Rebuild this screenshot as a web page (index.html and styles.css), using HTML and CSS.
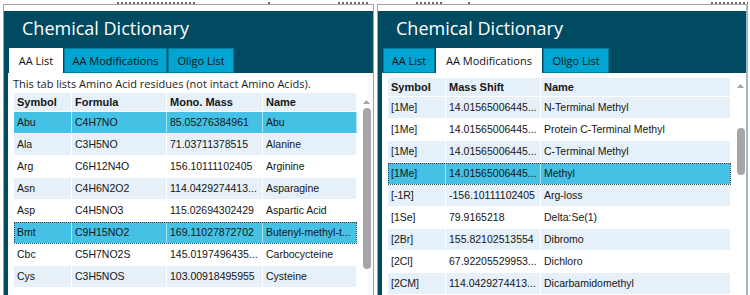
FILE: index.html
```
<!DOCTYPE html>
<html lang="en">
<head>
    <meta charset="UTF-8">
    <meta name="viewport" content="width=device-width, initial-scale=1.0">
    <title>Chemical Dictionary</title>
    <link rel="stylesheet" href="styles.css">
</head>
<body>
    <!-- bottom edge of the row above, cut off by the capture -->
    <div class="strip">
        <span class="crumb crumb-1"></span>
        <span class="crumb crumb-2"></span>
        <span class="crumb crumb-3"></span>
        <span class="crumb crumb-4"></span>
        <span class="crumb crumb-5"></span>
        <span class="crumb crumb-6"></span>
    </div>

    <div class="windows">
        <!-- AA List tab -->
        <section class="window">
            <div class="panel">
                <h1 class="title">Chemical Dictionary</h1>
                <div class="tabs">
                    <div class="tab tab-aa active">AA List</div>
                    <div class="tab tab-mod">AA Modifications</div>
                    <div class="tab tab-oligo">Oligo List</div>
                </div>
                <div class="page">
                    <p class="note">This tab lists Amino Acid residues (not intact Amino Acids).</p>
                    <div class="grid">
                        <table class="list">
                            <colgroup>
                                <col class="col-symbol">
                                <col class="col-formula">
                                <col class="col-mass">
                                <col>
                            </colgroup>
                            <thead>
                                <tr><th>Symbol</th><th>Formula</th><th>Mono. Mass</th><th>Name</th></tr>
                            </thead>
                            <tbody>
                                <tr class="selected"><td>Abu</td><td>C4H7NO</td><td>85.05276384961</td><td>Abu</td></tr>
                                <tr class="alt"><td>Ala</td><td>C3H5NO</td><td>71.03711378515</td><td>Alanine</td></tr>
                                <tr><td>Arg</td><td>C6H12N4O</td><td>156.10111102405</td><td>Arginine</td></tr>
                                <tr class="alt"><td>Asn</td><td>C4H6N2O2</td><td>114.0429274413...</td><td>Asparagine</td></tr>
                                <tr><td>Asp</td><td>C4H5NO3</td><td>115.02694302429</td><td>Aspartic Acid</td></tr>
                                <tr class="selected focus"><td>Bmt</td><td>C9H15NO2</td><td>169.11027872702</td><td>Butenyl-methyl-t...</td></tr>
                                <tr><td>Cbc</td><td>C5H7NO2S</td><td>145.0197496435...</td><td>Carbocycteine</td></tr>
                                <tr class="alt"><td>Cys</td><td>C3H5NOS</td><td>103.00918495955</td><td>Cysteine</td></tr>
                                <tr><td></td><td></td><td></td><td></td></tr>
                            </tbody>
                        </table>
                        <div class="scrollbar">
                            <svg class="arrow" width="7" height="4" viewBox="0 0 7 4"><path d="M0 4 L3.5 0 L7 4 Z"/></svg>
                            <div class="thumb thumb-aa"></div>
                        </div>
                    </div>
                </div>
            </div>
        </section>

        <!-- AA Modifications tab -->
        <section class="window window-last">
            <div class="panel">
                <h1 class="title">Chemical Dictionary</h1>
                <div class="tabs">
                    <div class="tab tab-aa">AA List</div>
                    <div class="tab tab-mod active">AA Modifications</div>
                    <div class="tab tab-oligo">Oligo List</div>
                </div>
                <div class="page page-mods">
                    <div class="grid">
                        <table class="list">
                            <colgroup>
                                <col class="col-symbol">
                                <col class="col-formula">
                                <col>
                            </colgroup>
                            <thead>
                                <tr><th>Symbol</th><th>Mass Shift</th><th>Name</th></tr>
                            </thead>
                            <tbody>
                                <tr class="alt"><td>[1Me]</td><td>14.01565006445...</td><td>N-Terminal Methyl</td></tr>
                                <tr><td>[1Me]</td><td>14.01565006445...</td><td>Protein C-Terminal Methyl</td></tr>
                                <tr class="alt"><td>[1Me]</td><td>14.01565006445...</td><td>C-Terminal Methyl</td></tr>
                                <tr class="selected focus"><td>[1Me]</td><td>14.01565006445...</td><td>Methyl</td></tr>
                                <tr class="alt"><td>[-1R]</td><td>-156.10111102405</td><td>Arg-loss</td></tr>
                                <tr><td>[1Se]</td><td>79.9165218</td><td>Delta:Se(1)</td></tr>
                                <tr class="alt"><td>[2Br]</td><td>155.82102513554</td><td>Dibromo</td></tr>
                                <tr><td>[2Cl]</td><td>67.92205529953...</td><td>Dichloro</td></tr>
                                <tr class="alt"><td>[2CM]</td><td>114.0429274413...</td><td>Dicarbamidomethyl</td></tr>
                            </tbody>
                        </table>
                        <div class="scrollbar">
                            <svg class="arrow arrow-mods" width="7" height="4" viewBox="0 0 7 4"><path d="M0 4 L3.5 0 L7 4 Z"/></svg>
                            <div class="thumb thumb-mods"></div>
                        </div>
                    </div>
                </div>
            </div>
        </section>
    </div>
</body>
</html>
```

FILE: styles.css
```
/* General Reset */
* {
    margin: 0;
    padding: 0;
    box-sizing: border-box;
}

body {
    font-family: "Open Sans", "Noto Sans", sans-serif;
    background: #ffffff;
    color: #1b1b1b;
    width: 750px;
    height: 295px;
    overflow: hidden;
}

/* Cut off strip at the top */
.strip {
    display: flex;
    align-items: flex-end;
    height: 4px;
}

.crumb {
    height: 2px;
    background: repeating-linear-gradient(90deg, #6a6a6a 0 2px, transparent 2px 4px);
}

.crumb-1 { margin-left: 117px; width: 78px; }
.crumb-2 { margin-left: 73px; width: 4px; }
.crumb-3 { margin-left: 66px; width: 30px; }
.crumb-4 { margin-left: 48px; width: 27px; }
.crumb-5 { margin-left: 25px; width: 4px; }
.crumb-6 { margin-left: 239px; width: 37px; }

/* Windows */
.windows {
    display: flex;
    gap: 3px;
    padding-left: 3px;
    height: 291px;
}

.window {
    width: 371px;
    height: 100%;
    padding-top: 6px;
    border-top: 1px solid #a3a3a3;
    border-left: 1px solid #a3a3a3;
    border-right: 1px solid #a3a3a3;
    overflow: hidden;
}

.window-last {
    border-right: 2px solid #9dbccb;
}

.panel {
    height: 100%;
    background: #004a62;
    display: flex;
    flex-direction: column;
    overflow: hidden;
}

.title {
    font-size: 18px;
    font-weight: normal;
    line-height: 24px;
    color: #ffffff;
    padding: 5px 18px 8px;
}

/* Tabs */
.tabs {
    display: flex;
    gap: 1px;
    height: 25px;
    padding-left: 5px;
}

.tab {
    height: 25px;
    line-height: 23px;
    font-size: 11px;
    text-align: center;
    white-space: nowrap;
    background: #00a5d2;
    border: 1px solid #007c9f;
    color: #111111;
}

.tab.active {
    background: #ffffff;
    border-color: #ffffff;
}

.tab-aa { width: 52px; }
.tab-mod { width: 103px; }
.tab-oligo { width: 66px; }

.tab-aa.active { width: 54px; }
.tab-mod.active { width: 106px; }

/* Tab page */
.page {
    flex: 1;
    margin-left: 4px;
    background: #ffffff;
}

.page-mods {
    padding-top: 5px;
}

.note {
    font-size: 11px;
    line-height: 15px;
    padding: 3px 0 2px 5px;
    color: #1b1b1b;
}

.grid {
    display: flex;
    margin-left: 6px;
}

/* Data grid */
.list {
    width: 343px;
    flex-shrink: 0;
    table-layout: fixed;
    border-collapse: separate;
    border-spacing: 0;
    font-family: "Liberation Sans", Arial, sans-serif;
    font-size: 11px;
    color: #151515;
}

.col-symbol { width: 58px; }
.col-formula { width: 95px; }
.col-mass { width: 96px; }

.list th,
.list td {
    text-align: left;
    padding-left: 3px;
    white-space: nowrap;
    overflow: hidden;
    border-right: 1px solid #ffffff;
    border-bottom: 1px solid #ffffff;
}

.list th {
    height: 19px;
    line-height: 18px;
    font-weight: bold;
    background: #e6f0f9;
}

.list td {
    height: 22px;
    line-height: 21px;
    font-size: 10.5px;
    background: #ffffff;
}

.list tr.alt td {
    background: #e6f0f9;
}

.list tr.selected td {
    background: #44c1e4;
    border-right-color: #a9e2f2;
}

.list tr.focus {
    outline: 1px dotted #2a4a55;
    outline-offset: -1px;
}

/* Scroll bar */
.scrollbar {
    width: 18px;
    flex-shrink: 0;
    display: flex;
    flex-direction: column;
    align-items: center;
    background: #ffffff;
}

.arrow {
    fill: #a3a3a3;
    margin-top: 7px;
    margin-left: 1px;
}

.arrow-mods {
    margin-top: 6px;
}

.thumb {
    width: 8px;
    margin-left: 1px;
    border-radius: 4px;
    background: #a6a6a6;
}

.thumb-aa {
    margin-top: 4px;
    height: 161px;
}

.thumb-mods {
    margin-top: 40px;
    height: 47px;
}
```
